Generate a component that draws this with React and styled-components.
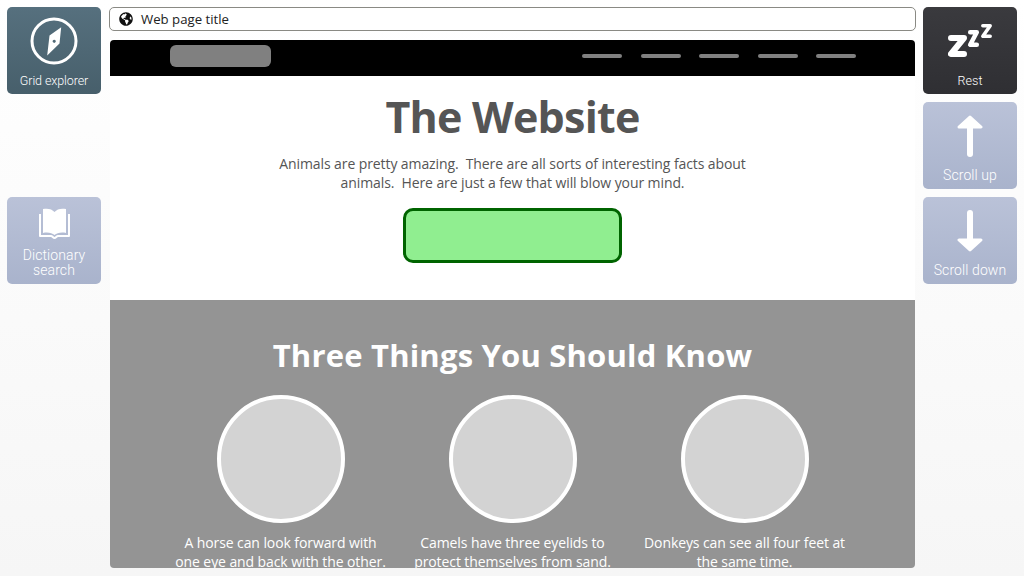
import React from "react";
import styled, { createGlobalStyle } from "styled-components";
import { FaGlobeAmericas } from "react-icons/fa";

const GlobalStyle = createGlobalStyle`
  html, body {
    margin: 0;
    padding: 0;
    height: 576px;
    overflow: hidden;
  }
  body {
    font-family: "Open Sans", "Noto Sans", sans-serif;
    background: linear-gradient(#ffffff, #f6f6f6);
  }
`;

const Page = styled.div`
  display: grid;
  grid-template-columns: 94px 822px 94px;
  width: 1024px;
  height: 576px;
  box-sizing: border-box;
  padding: 7px 7px 8px;
  overflow: hidden;
`;

const Side = styled.div`
  display: grid;
  grid-template-rows: repeat(3, 87px);
  row-gap: 8px;
  align-content: start;
`;

const Tile = styled.div`
  grid-row: ${(props) => props.row};
  display: flex;
  flex-direction: column;
  align-items: center;
  box-sizing: border-box;
  padding-top: 1px;
  border-radius: 5px;
  color: #fff;
  background: ${(props) => props.bg};
  font-family: Roboto, "Open Sans", sans-serif;
  font-weight: 300;
  line-height: 15px;
  text-align: center;
`;

const TileIcon = styled.div`
  flex: 1;
  display: flex;
  align-items: center;
  justify-content: center;
`;

const TileLabel = styled.div`
  padding-bottom: 6px;
  font-size: ${(props) => props.size || 14}px;
  letter-spacing: ${(props) => props.spacing ?? 0.1}px;
`;

const Center = styled.div`
  display: flex;
  flex-direction: column;
  min-height: 0;
  padding: 0 7px 0 8px;
`;

const TitleBar = styled.div`
  display: flex;
  align-items: center;
  gap: 8px;
  box-sizing: border-box;
  height: 24px;
  padding-left: 9px;
  background: #fff;
  border: 1px solid #8a8a84;
  border-radius: 5px;
  font-size: 13.2px;
  color: #222;
`;

const Browser = styled.div`
  flex: 1;
  display: flex;
  flex-direction: column;
  min-height: 0;
  margin: 9px 1px 0;
  border-radius: 4px;
  overflow: hidden;
  background: #fff;
`;

const NavBar = styled.div`
  flex: none;
  display: flex;
  align-items: center;
  justify-content: space-between;
  box-sizing: border-box;
  height: 36px;
  padding: 0 59px 5px 60px;
  background: #000;
`;

const Logo = styled.div`
  width: 101px;
  height: 22px;
  margin-top: 1px;
  border-radius: 6px;
  background: #808080;
`;

const NavLinks = styled.div`
  display: flex;
  gap: 18.5px;
  margin-top: 1px;
`;

const NavLink = styled.div`
  width: 40px;
  height: 4px;
  border-radius: 2px;
  background: #808080;
`;

const Hero = styled.section`
  flex: none;
  display: flex;
  flex-direction: column;
  align-items: center;
  box-sizing: border-box;
  height: 224px;
  padding-top: 11px;
`;

const HeroTitle = styled.h1`
  margin: 0;
  font-size: 43px;
  line-height: 60px;
  font-weight: 700;
  letter-spacing: -0.75px;
  color: #555;
`;

const HeroText = styled.p`
  margin: 7px 0 0;
  width: 500px;
  font-size: 14px;
  line-height: 19px;
  letter-spacing: -0.09px;
  text-align: center;
  color: #555;
`;

const CallToAction = styled.div`
  box-sizing: border-box;
  width: 219px;
  height: 55px;
  margin-top: 16px;
  background: #90ee90;
  border: 3px solid #006400;
  border-radius: 10px;
`;

const Facts = styled.section`
  flex: 1;
  min-height: 0;
  overflow: hidden;
  background: #949494;
  color: #fff;
`;

const FactsTitle = styled.h2`
  margin: 32px 0 0;
  font-size: 31px;
  line-height: 46px;
  font-weight: 700;
  letter-spacing: 0.2px;
  text-align: center;
`;

const FactsRow = styled.div`
  display: grid;
  grid-template-columns: repeat(3, 232px);
  justify-content: center;
  margin-top: 17px;
`;

const Fact = styled.div`
  display: flex;
  flex-direction: column;
  align-items: center;
`;

const Circle = styled.div`
  box-sizing: border-box;
  width: 128px;
  height: 128px;
  border: 4px solid #fff;
  border-radius: 50%;
  background: #d3d3d3;
`;

const FactText = styled.p`
  margin: 10px 0 0;
  width: 216px;
  font-size: 14px;
  line-height: 19px;
  letter-spacing: -0.09px;
  text-align: center;
`;

const CompassIcon = () => (
  <svg width="48" height="48" viewBox="0 0 48 48">
    <circle cx="24" cy="24" r="22" fill="none" stroke="#fff" strokeWidth="3" />
    <path
      fillRule="evenodd"
      fill="#fff"
      d="M31.2 10.2 L29.5 26.5 L17.2 38.5 L19.5 18.5 Z M24.2 22.7 a1.6 1.6 0 1 0 .01 0 Z"
    />
  </svg>
);

const BookIcon = () => (
  <svg width="33" height="33" viewBox="0 0 33 33">
    <path
      fill="#fff"
      d="M5 2 C10 1 14 2 16.5 5 C19 2 23 1 28 2 V26 C23 25 19 26 16.5 28 C14 26 10 25 5 26 Z"
    />
    <path
      fill="none"
      stroke="#fff"
      strokeWidth="2"
      strokeLinejoin="round"
      d="M2 7 V29 H13 C14.5 29 15 31 16.5 31 C18 31 18.5 29 20 29 H31 V7"
    />
  </svg>
);

const SleepIcon = () => (
  <svg width="44" height="33" viewBox="0 0 44 33">
    <g fill="none" stroke="#fff" strokeLinecap="round" strokeLinejoin="round">
      <path strokeWidth="6" d="M3 14 H16 L3 30 H16" />
      <path strokeWidth="4.5" d="M22.2 8.2 H28.8 L22.2 20.8 H28.8" />
      <path strokeWidth="3.5" d="M34.8 1.8 H42.2 L34.8 12.2 H42.2" />
    </g>
  </svg>
);

const ArrowIcon = ({ down }) => (
  <svg
    width="26"
    height="42"
    viewBox="0 0 26 42"
    style={down ? { transform: "rotate(180deg)" } : undefined}
  >
    <path
      fill="#fff"
      stroke="#fff"
      strokeWidth="3"
      strokeLinejoin="round"
      d="M13 2 L24 12 H2 Z"
    />
    <path stroke="#fff" strokeWidth="6" strokeLinecap="round" d="M13 12 V39" />
  </svg>
);

const FACTS = [
  "A horse can look forward with one eye and back with the other.",
  "Camels have three eyelids to protect themselves from sand.",
  "Donkeys can see all four feet at the same time.",
];

const DARK_TEAL = "linear-gradient(#56707e, #475f6b)";
const CHARCOAL = "linear-gradient(#3a3a3e, #2f2f33)";
const LAVENDER = "linear-gradient(#bac2d8, #a9b3cc)";

function App() {
  return (
    <Page>
      <GlobalStyle />
      <Side>
        <Tile row={1} bg={DARK_TEAL}>
          <TileIcon>
            <CompassIcon />
          </TileIcon>
          <TileLabel size={12.5} spacing={-0.1}>
            Grid explorer
          </TileLabel>
        </Tile>
        <Tile row={3} bg={LAVENDER}>
          <TileIcon>
            <BookIcon />
          </TileIcon>
          <TileLabel>
            Dictionary
            <br />
            search
          </TileLabel>
        </Tile>
      </Side>
      <Center>
        <TitleBar>
          <FaGlobeAmericas size={14} color="#111" />
          Web page title
        </TitleBar>
        <Browser>
          <NavBar>
            <Logo />
            <NavLinks>
              {[0, 1, 2, 3, 4].map((i) => (
                <NavLink key={i} />
              ))}
            </NavLinks>
          </NavBar>
          <Hero>
            <HeroTitle>The Website</HeroTitle>
            <HeroText>
              Animals are pretty amazing.&nbsp; There are all sorts of
              interesting facts about animals.&nbsp; Here are just a few that
              will blow your mind.
            </HeroText>
            <CallToAction />
          </Hero>
          <Facts>
            <FactsTitle>Three Things You Should Know</FactsTitle>
            <FactsRow>
              {FACTS.map((text) => (
                <Fact key={text}>
                  <Circle />
                  <FactText>{text}</FactText>
                </Fact>
              ))}
            </FactsRow>
          </Facts>
        </Browser>
      </Center>
      <Side>
        <Tile row={1} bg={CHARCOAL}>
          <TileIcon>
            <SleepIcon />
          </TileIcon>
          <TileLabel size={12.5}>Rest</TileLabel>
        </Tile>
        <Tile row={2} bg={LAVENDER}>
          <TileIcon>
            <ArrowIcon />
          </TileIcon>
          <TileLabel>Scroll up</TileLabel>
        </Tile>
        <Tile row={3} bg={LAVENDER}>
          <TileIcon>
            <ArrowIcon down />
          </TileIcon>
          <TileLabel>Scroll down</TileLabel>
        </Tile>
      </Side>
    </Page>
  );
}

export default App;
